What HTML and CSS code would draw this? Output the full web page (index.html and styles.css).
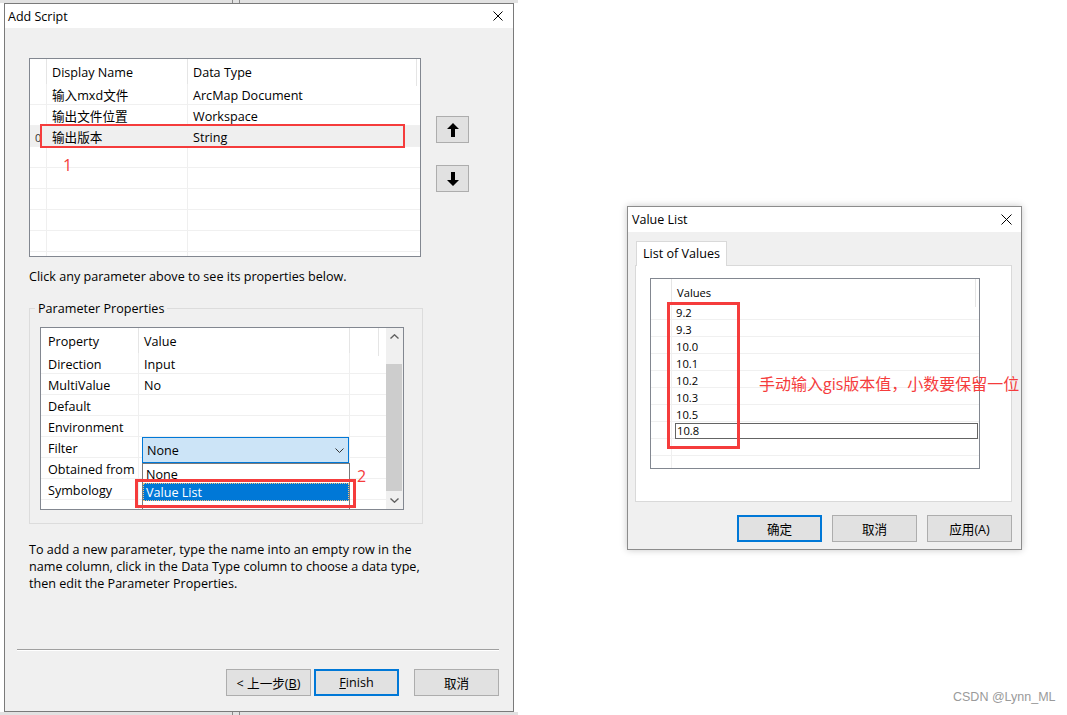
FILE: index.html
```html
<!DOCTYPE html>
<html lang="zh-CN">
<head>
    <meta charset="UTF-8">
    <meta name="viewport" content="width=device-width, initial-scale=1.0">
    <title>Add Script</title>
    <link rel="stylesheet" href="styles.css">
</head>
<body>
    <div class="desk-edge edge-top"><span class="edge-mark"></span></div>
    <div class="desk-edge edge-bottom"><span class="edge-mark"></span></div>

    <div class="window add-script">
        <div class="titlebar">
            <span class="title">Add Script</span>
            <svg class="close-icon" width="10" height="10" viewBox="0 0 10 10"><path d="M0.5 0.5L9.5 9.5M9.5 0.5L0.5 9.5" stroke="#000" stroke-width="1"/></svg>
        </div>
        <div class="client">
            <div class="param-row">
                <div class="param-list">
                    <div class="list-head">
                        <div class="cell"></div>
                        <div class="cell">Display Name</div>
                        <div class="cell">Data Type</div>
                        <div class="cell"></div>
                    </div>
                    <div class="list-row"><div class="cell"></div><div class="cell">输入mxd文件</div><div class="cell">ArcMap Document</div></div>
                    <div class="list-row"><div class="cell"></div><div class="cell">输出文件位置</div><div class="cell">Workspace</div></div>
                    <div class="list-row selected"><div class="cell row-mark">0</div><div class="cell">输出版本</div><div class="cell">String</div></div>
                    <div class="list-row"><div class="cell"></div><div class="cell"></div><div class="cell"></div></div>
                    <div class="list-row"><div class="cell"></div><div class="cell"></div><div class="cell"></div></div>
                    <div class="list-row"><div class="cell"></div><div class="cell"></div><div class="cell"></div></div>
                    <div class="list-row"><div class="cell"></div><div class="cell"></div><div class="cell"></div></div>
                    <div class="list-row"><div class="cell"></div><div class="cell"></div><div class="cell"></div></div>
                    <div class="list-row"><div class="cell"></div><div class="cell"></div><div class="cell"></div></div>
                </div>
                <div class="move-btns">
                    <button class="btn arrow-btn"><svg width="12" height="14" viewBox="0 0 12 14"><path d="M6 0L12 6H8V14H4V6H0Z"/></svg></button>
                    <button class="btn arrow-btn"><svg width="12" height="14" viewBox="0 0 12 14"><path d="M6 14L12 8H8V0H4V8H0Z"/></svg></button>
                </div>
            </div>

            <p class="hint">Click any parameter above to see its properties below.</p>

            <fieldset class="group">
                <legend>Parameter Properties</legend>
                <div class="prop-grid">
                    <div class="prop-table">
                        <div class="prop-head">
                            <div class="cell">Property</div>
                            <div class="cell">Value</div>
                            <div class="cell"></div>
                            <div class="cell"></div>
                        </div>
                        <div class="prop-row"><div class="cell">Direction</div><div class="cell">Input</div><div class="cell"></div></div>
                        <div class="prop-row"><div class="cell">MultiValue</div><div class="cell">No</div><div class="cell"></div></div>
                        <div class="prop-row"><div class="cell">Default</div><div class="cell"></div><div class="cell"></div></div>
                        <div class="prop-row"><div class="cell">Environment</div><div class="cell"></div><div class="cell"></div></div>
                        <div class="prop-row"><div class="cell">Filter</div><div class="cell"></div><div class="cell"></div></div>
                        <div class="prop-row"><div class="cell">Obtained from</div><div class="cell"></div><div class="cell"></div></div>
                        <div class="prop-row"><div class="cell">Symbology</div><div class="cell"></div><div class="cell"></div></div>
                        <div class="prop-row"><div class="cell"></div><div class="cell"></div><div class="cell"></div></div>
                    </div>
                    <div class="scrollbar">
                        <div class="scroll-btn"><svg width="9" height="5" viewBox="0 0 9 5"><path d="M0.5 4.5L4.5 0.8L8.5 4.5" fill="none" stroke="#606060" stroke-width="1.4"/></svg></div>
                        <div class="scroll-track"><div class="scroll-thumb"></div></div>
                        <div class="scroll-btn"><svg width="9" height="5" viewBox="0 0 9 5"><path d="M0.5 0.5L4.5 4.2L8.5 0.5" fill="none" stroke="#606060" stroke-width="1.4"/></svg></div>
                    </div>

                    <div class="combo">
                        <span>None</span>
                        <svg width="9" height="5" viewBox="0 0 9 5"><path d="M0.5 0.5L4.5 4.5L8.5 0.5" fill="none" stroke="#333" stroke-width="1"/></svg>
                    </div>
                    <div class="combo-list">
                        <div class="option">None</div>
                        <div class="option selected">Value List</div>
                    </div>
                </div>
            </fieldset>

            <p class="help">To add a new parameter, type the name into an empty row in the<br>name column, click in the Data Type column to choose a data type,<br>then edit the Parameter Properties.</p>

            <div class="footer">
                <div class="separator"></div>
                <div class="footer-btns">
                    <button class="btn">&lt; 上一步(<u>B</u>)</button>
                    <button class="btn default"><u>F</u>inish</button>
                    <button class="btn cancel">取消</button>
                </div>
            </div>
        </div>

        <div class="mark-box box-1"></div>
        <span class="mark-num num-1">1</span>
        <div class="mark-box box-2"></div>
        <span class="mark-num num-2">2</span>
    </div>

    <div class="window value-list">
        <div class="titlebar">
            <span class="title">Value List</span>
            <svg class="close-icon" width="11" height="11" viewBox="0 0 11 11"><path d="M0.5 0.5L10.5 10.5M10.5 0.5L0.5 10.5" stroke="#000" stroke-width="1"/></svg>
        </div>
        <div class="client">
            <div class="tab">List of Values</div>
            <div class="tab-page">
                <div class="values-grid">
                    <div class="values-head"><div class="cell"></div><div class="cell">Values</div><div class="cell"></div></div>
                    <div class="values-row"><div class="cell"></div><div class="cell">9.2</div></div>
                    <div class="values-row"><div class="cell"></div><div class="cell">9.3</div></div>
                    <div class="values-row"><div class="cell"></div><div class="cell">10.0</div></div>
                    <div class="values-row"><div class="cell"></div><div class="cell">10.1</div></div>
                    <div class="values-row"><div class="cell"></div><div class="cell">10.2</div></div>
                    <div class="values-row"><div class="cell"></div><div class="cell">10.3</div></div>
                    <div class="values-row"><div class="cell"></div><div class="cell">10.5</div></div>
                    <div class="values-row editing"><div class="cell"></div><div class="cell"><span class="edit-box">10.8</span></div></div>
                    <div class="values-row"><div class="cell"></div><div class="cell"></div></div>
                    <div class="values-row"><div class="cell"></div><div class="cell"></div></div>
                </div>
            </div>
            <div class="dialog-btns">
                <button class="btn default">确定</button>
                <button class="btn">取消</button>
                <button class="btn">应用(A)</button>
            </div>
        </div>

        <div class="mark-box box-3"></div>
        <span class="mark-note">手动输入gis版本值，小数要保留一位</span>
    </div>

    <div class="watermark">CSDN @Lynn_ML</div>
</body>
</html>
```

FILE: styles.css
```css
* {
    box-sizing: border-box;
}
body {
    margin: 0;
    width: 1067px;
    height: 715px;
    position: relative;
    overflow: hidden;
    background-color: #fff;
    font-family: "Open Sans", "Noto Sans CJK SC", sans-serif;
    font-size: 12.6px;
    color: #000;
}

/* bits of the desktop behind the left window */
.desk-edge {
    position: absolute;
    left: 0;
    width: 518px;
    height: 3px;
    background-color: #e2e2e2;
}
.edge-top {
    top: 0;
}
.edge-bottom {
    top: 712px;
}
.edge-mark {
    position: absolute;
    left: 232px;
    top: 0;
    width: 8px;
    height: 3px;
    border-left: 1px solid #8a8a8a;
    border-right: 1px solid #8a8a8a;
}

/* windows */
.window {
    position: absolute;
    display: flex;
    flex-direction: column;
    background-color: #f0f0f0;
    border: 1px solid #7a7a7a;
}
.add-script {
    left: 4px;
    top: 3px;
    width: 510px;
    height: 709px;
}
.value-list {
    left: 627px;
    top: 206px;
    width: 395px;
    height: 344px;
    border-color: #8c8c8c;
    box-shadow: 0 0 7px rgba(0,0,0,0.22);
}
.titlebar {
    flex: none;
    height: 24px;
    background-color: #fff;
    display: flex;
    align-items: center;
    justify-content: space-between;
    padding: 0 10px 0 3px;
}
.value-list .titlebar {
    height: 25px;
    padding: 0 9px 0 4px;
}
.title {
    font-size: 12.5px;
}
.client {
    flex: 1;
    display: flex;
    flex-direction: column;
}
.add-script .client {
    padding: 30px 0 0 24px;
}
.cell {
    white-space: nowrap;
}

/* buttons */
.btn {
    width: 85px;
    height: 27px;
    padding: 0;
    background-color: #e1e1e1;
    border: 1px solid #adadad;
    font: inherit;
    color: #000;
}
.btn.default {
    border: 2px solid #0078d7;
}
.arrow-btn {
    width: 33px;
    display: flex;
    align-items: center;
    justify-content: center;
}
.arrow-btn svg {
    fill: #000;
}

/* parameter list */
.param-row {
    display: flex;
    align-items: flex-start;
    gap: 15px;
}
.param-list {
    width: 392px;
    height: 199px;
    border: 1px solid #828790;
    background-color: #fff;
    overflow: hidden;
}
.list-head {
    display: grid;
    grid-template-columns: 17px 141px 229px 1fr;
    height: 25px;
    line-height: 27px;
}
.list-head .cell {
    border-right: 1px solid #e5e5e5;
    padding-left: 5px;
}
.list-head .cell:last-child {
    border-right: none;
}
.list-row {
    display: grid;
    grid-template-columns: 17px 141px 1fr;
    height: 21px;
    line-height: 23px;
    border-bottom: 1px solid #f0f0f0;
}
.list-row .cell {
    padding-left: 5px;
}
.list-row .cell:nth-child(1),
.list-row .cell:nth-child(2) {
    border-right: 1px solid #efefef;
}
.list-row.selected {
    background-color: #efefef;
}
.row-mark {
    font-size: 11px;
    color: #333;
}
.move-btns {
    display: flex;
    flex-direction: column;
    gap: 22px;
    margin-top: 58px;
}

.hint {
    margin: 11px 0 0;
    line-height: 18px;
}

/* parameter properties */
.group {
    width: 394px;
    margin: 14px 0 0;
    padding: 10px 18px 13px 10px;
    border: 1px solid #dcdcdc;
}
.group legend {
    margin-left: -5px;
    padding: 0 3px;
    line-height: 17px;
}
.prop-grid {
    position: relative;
    width: 364px;
    height: 183px;
    border: 1px solid #828790;
    background-color: #fff;
    overflow: hidden;
    display: flex;
}
.prop-table {
    flex: 1;
    overflow: hidden;
}
.prop-head {
    display: grid;
    grid-template-columns: 98px 211px 29px 1fr;
    height: 25px;
    line-height: 28px;
}
.prop-head .cell {
    border-right: 1px solid #e5e5e5;
}
.prop-head .cell:last-child {
    border-right: none;
}
.prop-row {
    display: grid;
    grid-template-columns: 98px 211px 1fr;
    height: 21px;
    line-height: 24px;
    border-bottom: 1px solid #f0f0f0;
}
.prop-row .cell:nth-child(1),
.prop-row .cell:nth-child(2) {
    border-right: 1px solid #efefef;
}
.prop-head .cell:first-child,
.prop-row .cell:first-child {
    padding-left: 7px;
}
.prop-head .cell:nth-child(2),
.prop-row .cell:nth-child(2) {
    padding-left: 5px;
}
.scrollbar {
    width: 17px;
    display: flex;
    flex-direction: column;
    background-color: #f0f0f0;
}
.scroll-btn {
    height: 17px;
    display: flex;
    align-items: center;
    justify-content: center;
}
.scroll-track {
    flex: 1;
    padding: 19px 1px 0 0;
}
.scroll-thumb {
    height: 127px;
    background-color: #cdcdcd;
}
.combo {
    position: absolute;
    left: 101px;
    top: 109px;
    width: 207px;
    height: 26px;
    border: 1px solid #0078d7;
    background-color: #cce4f7;
    display: flex;
    align-items: center;
    justify-content: space-between;
    padding: 1px 4px 0 4px;
}
.combo-list {
    position: absolute;
    left: 101px;
    top: 135px;
    width: 208px;
    height: 50px;
    background-color: #fff;
    border: 1px solid #7a7a7a;
    border-bottom: none;
    padding-top: 1px;
}
.option {
    height: 18px;
    line-height: 20px;
    padding-left: 3px;
}
.option.selected {
    background-color: #0078d7;
    color: #fff;
    outline: 1px dotted #f5c27a;
    outline-offset: -1px;
}

.help {
    margin: 17px 0 0;
    line-height: 17px;
    white-space: nowrap;
}

.footer {
    margin: auto 0 0 -12px;
    width: 482px;
    padding-bottom: 15px;
}
.separator {
    border-top: 1px solid #a0a0a0;
    border-bottom: 1px solid #fff;
}
.footer-btns {
    display: flex;
    justify-content: flex-end;
    gap: 3px;
    margin-top: 18px;
}
.footer-btns .cancel {
    margin-left: 12px;
}

/* value list dialog */
.value-list .client {
    padding: 9px 9px 0 7px;
}
.tab {
    position: relative;
    z-index: 1;
    width: 91px;
    height: 25px;
    margin: 0 0 -1px 1px;
    padding-left: 6px;
    line-height: 24px;
    background-color: #fff;
    border: 1px solid #d9d9d9;
    border-bottom: none;
}
.tab-page {
    width: 377px;
    height: 237px;
    background-color: #fff;
    border: 1px solid #d9d9d9;
    padding: 12px 0 0 14px;
}
.values-grid {
    width: 330px;
    height: 191px;
    border: 1px solid #828790;
    overflow: hidden;
    font-size: 11.2px;
}
.values-head {
    display: grid;
    grid-template-columns: 21px 304px 1fr;
    height: 24px;
    line-height: 28px;
}
.values-head .cell {
    border-right: 1px solid #e5e5e5;
}
.values-head .cell:nth-child(2) {
    padding-left: 5px;
}
.values-head .cell:last-child {
    border-right: none;
}
.values-row {
    display: grid;
    grid-template-columns: 21px 1fr;
    height: 17px;
    line-height: 19px;
    border-bottom: 1px solid #f0f0f0;
}
.values-row .cell:first-child {
    border-right: 1px solid #efefef;
}
.values-row .cell:nth-child(2) {
    padding-left: 4px;
}
.values-row.editing .cell:nth-child(2) {
    padding-left: 3px;
}
.edit-box {
    display: block;
    width: 303px;
    height: 16px;
    margin-top: 1px;
    line-height: 14px;
    padding-left: 1px;
    border: 1px solid #646464;
    background-color: #fff;
}
.dialog-btns {
    display: flex;
    justify-content: flex-end;
    gap: 10px;
    margin-top: 13px;
}

/* red annotations drawn over the screenshot */
.mark-box {
    position: absolute;
    border: 3px solid #f53c3c;
}
.box-1 {
    left: 35px;
    top: 120px;
    width: 365px;
    height: 24px;
    border-width: 2px;
}
.box-2 {
    left: 130px;
    top: 475px;
    width: 221px;
    height: 29px;
}
.box-3 {
    left: 39px;
    top: 95px;
    width: 73px;
    height: 147px;
}
.mark-num {
    position: absolute;
    font-size: 16px;
    line-height: 16px;
    color: #f53c3c;
}
.num-1 {
    left: 58px;
    top: 153px;
}
.num-2 {
    left: 352px;
    top: 464px;
}
.mark-note {
    position: absolute;
    left: 131px;
    top: 167px;
    font-size: 16px;
    line-height: 20px;
    color: #f53c3c;
    white-space: nowrap;
}

.watermark {
    position: absolute;
    left: 953px;
    top: 690px;
    font-family: "Liberation Sans", sans-serif;
    font-size: 12.5px;
    color: #9a9a9a;
}
```
